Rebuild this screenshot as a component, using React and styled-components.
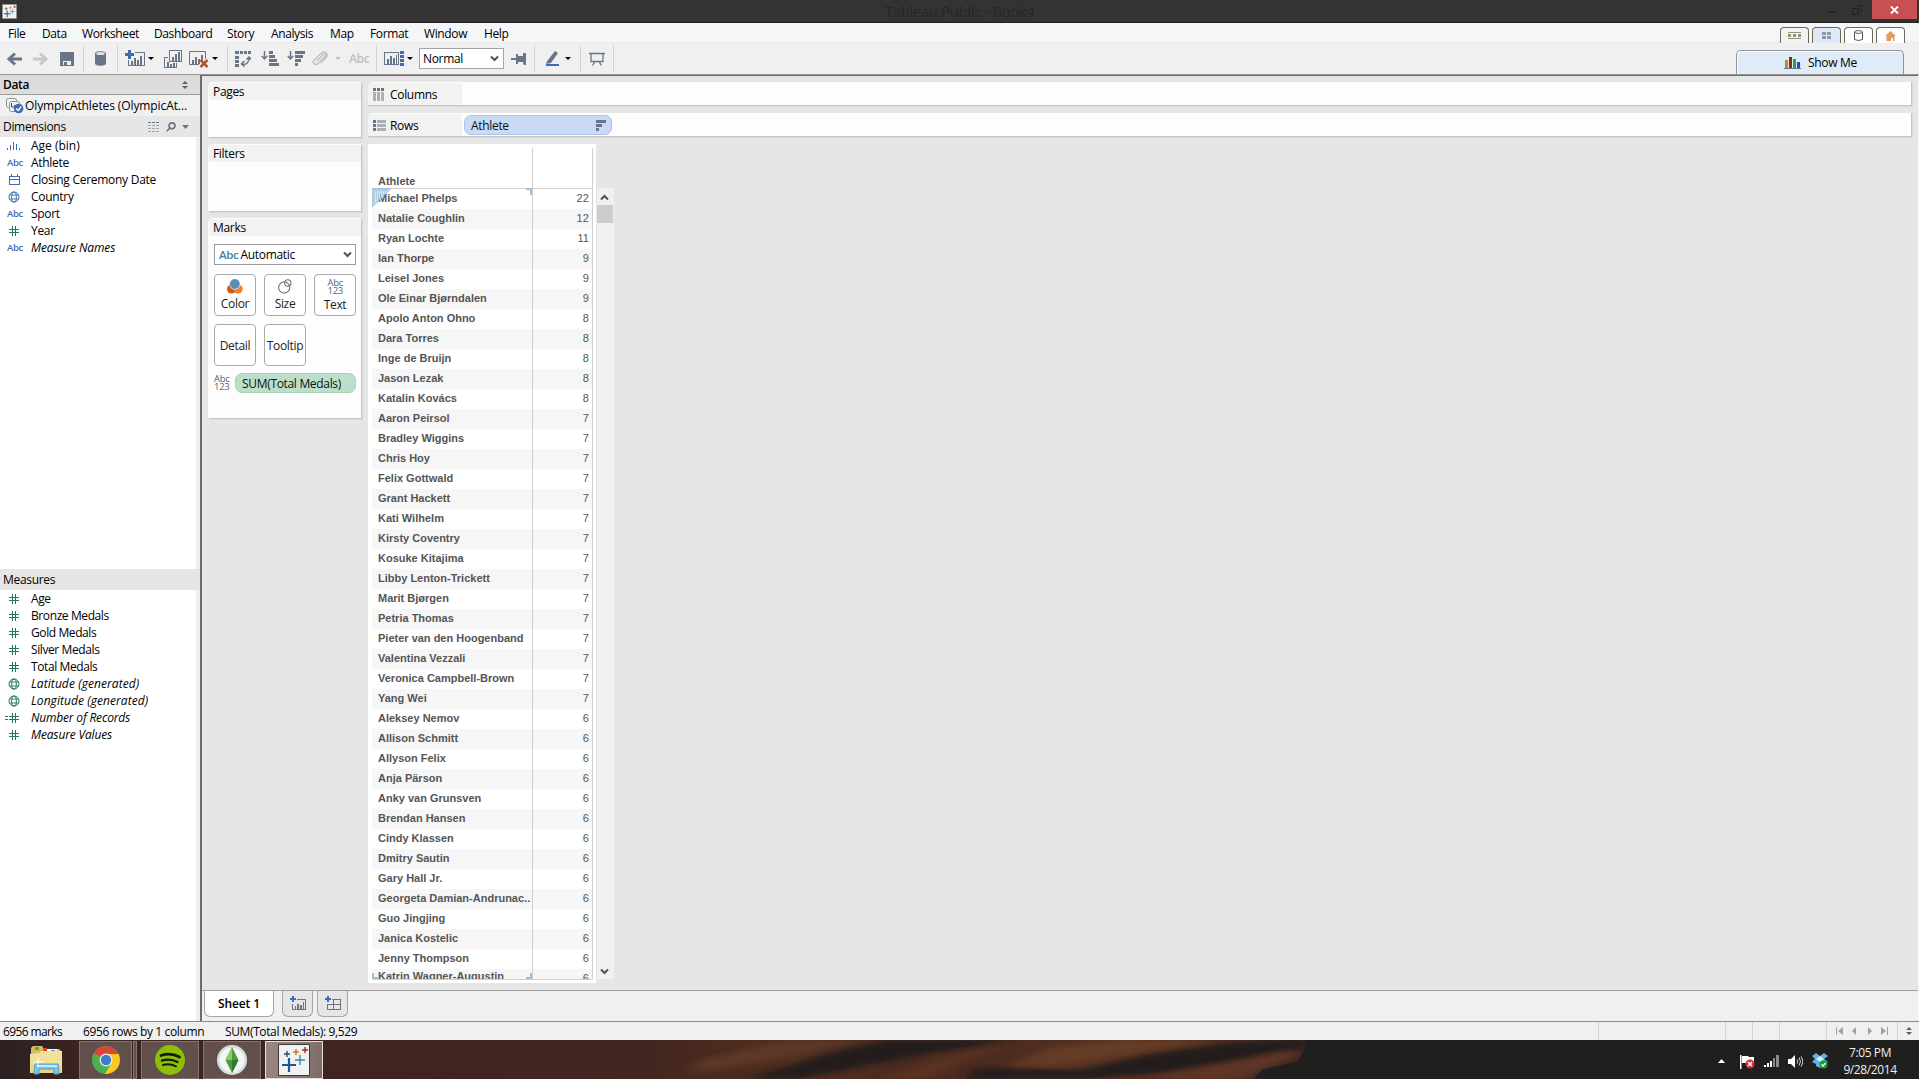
import React from 'react';
import styled, { createGlobalStyle } from 'styled-components';

const Global = createGlobalStyle`
  * { box-sizing: border-box; }
  body { margin: 0; overflow: hidden; background: #f0f0f0; }
  svg { display: block; flex: none; }
`;

const INK = '#687589';
const BLUE = '#3f6db5';
const GREEN = '#1f7a5a';

const Window = styled.div`
  width: 1919px;
  height: 1079px;
  display: flex;
  flex-direction: column;
  background: #f0f0f0;
  font-family: 'Open Sans', 'Noto Sans', sans-serif;
  font-size: 12px;
  letter-spacing: -0.32px;
  color: #000;
  white-space: nowrap;
`;

/* ---------- title bar ---------- */
const TitleBar = styled.header`
  height: 23px;
  background: #333;
  border-bottom: 1px solid #222;
  display: flex;
  align-items: flex-start;
`;
const AppBadge = styled.div`
  margin: 4px 0 0 2px;
  width: 16px;
  height: 15px;
`;
const TitleText = styled.div`
  flex: 1;
  margin-left: 867px;
  color: #262626;
  font-size: 14.6px;
  line-height: 23px;
  letter-spacing: -0.2px;
`;
const WinButtons = styled.div`
  display: flex;
  width: 98px;
  padding-left: 1px;
`;
const WinButton = styled.div`
  width: ${(p) => p.$w}px;
  height: 19px;
  display: flex;
  align-items: center;
  justify-content: center;
  background: ${(p) => p.$bg || 'transparent'};
`;

/* ---------- menu bar ---------- */
const MenuBar = styled.nav`
  height: 20px;
  background: #f5f6f8;
  display: flex;
  border-bottom: 1px solid #ececee;
  padding-left: 8px;
`;
const MenuItem = styled.span`
  width: ${(p) => p.$w}px;
  line-height: 21px;
  letter-spacing: -0.38px;
`;
const ViewTabs = styled.div`
  margin-left: auto;
  display: flex;
  gap: 3px;
  padding: 4px 14px 0 0;
`;
const ViewTab = styled.div`
  width: 29px;
  height: 16px;
  border: 1px solid #6c6a5c;
  border-bottom: 0;
  border-radius: 4px 4px 0 0;
  background: ${(p) => p.$bg};
  display: flex;
  align-items: center;
  justify-content: center;
`;

/* ---------- toolbar ---------- */
const Toolbar = styled.div`
  height: 32px;
  display: flex;
  align-items: center;
  border-bottom: 1px solid #979797;
`;
const Tool = styled.div`
  margin-left: ${(p) => p.$ml}px;
`;
const Sep = styled.div`
  margin-left: ${(p) => p.$ml}px;
  width: 1px;
  height: 27px;
  background: #d2d2d2;
`;
const Caret = styled.div`
  margin-left: ${(p) => p.$ml}px;
  border: 3px solid transparent;
  border-top-color: ${(p) => p.$c || '#000'};
  border-bottom: 0;
  width: 6px;
`;
const AbcTool = styled.div`
  margin-left: 8px;
  width: 20px;
  color: #bdbdbd;
  font-size: 12px;
  font-weight: 600;
`;
const FitSelect = styled.div`
  margin-left: 6px;
  width: 85px;
  height: 21px;
  border: 1px solid #a3a3a8;
  background: #fff;
  display: flex;
  align-items: center;
  justify-content: space-between;
  padding: 0 4px 1px 3px;
`;
const ShowMe = styled.div`
  align-self: flex-end;
  margin: 0 15px 0 auto;
  width: 168px;
  height: 24px;
  border: 1px solid #8f9296;
  border-bottom: 0;
  border-radius: 5px 5px 0 0;
  background: #dfebf6;
  box-shadow: inset 1px 1px 0 #fff;
  display: flex;
  align-items: center;
  padding-left: 47px;
  gap: 7px;
`;

/* ---------- body ---------- */
const Body = styled.div`
  height: 946px;
  display: flex;
`;
const DataPane = styled.aside`
  width: 200px;
  display: flex;
  flex-direction: column;
`;
const PaneTitle = styled.div`
  height: 20px;
  background: #dcdcdc;
  border-bottom: 1px solid #9c9c9c;
  display: flex;
  align-items: center;
  justify-content: space-between;
  padding: 0 12px 0 3px;
  font-weight: 600;
`;
const Source = styled.div`
  height: 21px;
  display: flex;
  align-items: center;
  gap: 1px;
  padding-left: 6px;
  background: #f0f0f0;
  letter-spacing: -0.1px;
`;
const SectionHead = styled.div`
  height: 21px;
  background: #e6e6e6;
  display: flex;
  align-items: center;
  padding: 0 11px 0 3px;
`;
const HeadIcons = styled.div`
  margin-left: auto;
  display: flex;
  align-items: center;
  gap: 6px;
`;
const FieldList = styled.div`
  height: ${(p) => p.$h}px;
  width: 196px;
  background: #fff;
`;
const Field = styled.div`
  height: 17px;
  line-height: 16px;
  display: grid;
  grid-template-columns: 31px 1fr;
  align-items: center;
  font-style: ${(p) => (p.$italic ? 'italic' : 'normal')};
  letter-spacing: ${(p) => p.$ls ?? -0.3}px;
`;
const FieldIcon = styled.div`
  padding-left: ${(p) => p.$pl || 7}px;
  color: #3f6db5;
  font-size: 9.5px;
  font-style: normal;
  font-weight: 600;
  letter-spacing: -0.3px;
`;

const Main = styled.main`
  flex: 1;
  display: flex;
  flex-direction: column;
  border-left: 2px solid #6d6a6a;
  border-right: 1px solid #f8f8f8;
`;
const Workspace = styled.section`
  height: 915px;
  background: #e6e6e6;
  border-top: 1px solid #6d6a6a;
  padding: 6px 6px 0 6px;
  display: flex;
  gap: 6px;
`;
const CardColumn = styled.div`
  display: flex;
  flex-direction: column;
  gap: 6px;
  width: 154px;
`;
const Card = styled.section`
  height: ${(p) => p.$h}px;
  background: #fdfdfd;
  border: 1px solid #fdfdfd;
  border-right-color: #c6c6c6;
  border-bottom-color: #c6c6c6;
  border-radius: 5px 1px 0 0;
  box-shadow: 1px 1px 0 #dadada;
  overflow: hidden;
`;
const CardHead = styled.div`
  height: 17px;
  padding-left: 4px;
  line-height: 17px;
  background: #f2f2f1;
`;
const MarkBody = styled.div`
  padding: 8px 5px 0 5px;
`;
const MarkSelect = styled.div`
  height: 21px;
  border: 1px solid #9d9da2;
  background: #fff;
  display: flex;
  align-items: center;
  gap: 2px;
  padding: 0 3px 1px 4px;
  svg { margin-left: auto; }
`;
const AbcBlue = styled.span`
  color: #4a7fa3;
  font-size: 11.5px;
  font-weight: 600;
`;
const MarkGrid = styled.div`
  display: grid;
  grid-template-columns: repeat(3, 42px);
  grid-auto-rows: 42px;
  gap: 8px;
  margin-top: 9px;
`;
const MarkButton = styled.div`
  border: 1px solid #a9a9a9;
  border-radius: 4px;
  background: #fff;
  color: #222;
  display: flex;
  flex-direction: column;
  align-items: center;
  justify-content: center;
  line-height: 15px;
  gap: 2px;
`;
const Abc123 = styled.div`
  width: 15px;
  color: #56647a;
  font-size: 9.5px;
  font-weight: 500;
  line-height: 8px;
  letter-spacing: -0.3px;
  text-align: center;
  white-space: pre-line;
`;
const PillRow = styled.div`
  display: flex;
  align-items: center;
  gap: 6px;
  margin-top: 7px;
`;
const Pill = styled.div`
  width: ${(p) => p.$w}px;
  height: 20px;
  border-radius: 7px;
  border: 1px solid ${(p) => p.$line};
  background: ${(p) => p.$bg};
  display: flex;
  align-items: center;
  justify-content: space-between;
  padding: 0 5px 0 6px;
  color: #111;
`;

const Canvas = styled.div`
  flex: 1;
  display: flex;
  flex-direction: column;
  gap: 7px;
`;
const Shelf = styled.div`
  height: 24px;
  background: #fdfdfd;
  border-right: 1px solid #c6c6c6;
  border-bottom: 1px solid #c6c6c6;
  border-radius: 5px 0 0 0;
  box-shadow: 1px 1px 0 #dadada;
  padding-top: 1px;
  display: flex;
  align-items: center;
`;
const ShelfName = styled.div`
  width: 94px;
  height: 22px;
  margin-right: 2px;
  padding: 1px 0 0 5px;
  border-radius: 4px 0 0 0;
  background: #f2f2f1;
  display: flex;
  align-items: center;
  gap: ${(p) => p.$gap}px;
`;
const VizRow = styled.div`
  display: flex;
  gap: 1px;
  height: 839px;
`;
const Viz = styled.div`
  width: 228px;
  background: #fff;
  padding: 4px 3px 4px 4px;
`;
const Table = styled.div`
  height: 832px;
  border-right: 1px solid #d0d0d0;
  border-bottom: 1px solid #d0d0d0;
  position: relative;
  font-family: 'Liberation Sans', Arial, sans-serif;
  font-size: 11px;
  letter-spacing: 0;
  color: #555;
  overflow: hidden;
`;
const TableHead = styled.div`
  height: 41px;
  border-bottom: 1px solid #d0d0d0;
  padding: 26px 0 0 6px;
  font-weight: 700;
  line-height: 14px;
`;
const Row = styled.div`
  height: 20px;
  line-height: 19px;
  display: grid;
  grid-template-columns: 160px 1fr;
  background: ${(p) => (p.$alt ? '#f6f6f6' : '#fff')};
`;
const Name = styled.div`
  font-weight: 700;
  padding-left: 6px;
  line-height: ${(p) => (p.$last ? 14 : 19)}px;
`;
const Value = styled.div`
  text-align: right;
  padding-right: 3px;
  letter-spacing: 0.1px;
  line-height: ${(p) => (p.$last ? 19 : 19)}px;
`;
const ColumnRule = styled.div`
  position: absolute;
  left: 160px;
  top: 0;
  bottom: 0;
  width: 1px;
  background: #d0d0d0;
`;
const Overlay = styled.div`
  position: absolute;
  left: ${(p) => p.$x}px;
  top: ${(p) => p.$y}px;
`;
const Scrollbar = styled.div`
  margin-top: 44px;
  width: 17px;
  height: 791px;
  background: #f0f0f0;
  display: flex;
  flex-direction: column;
  align-items: flex-start;
`;
const ScrollArrow = styled.div`
  height: 17px;
  display: flex;
  align-items: center;
  padding: 1px 0 0 3px;
  margin-top: ${(p) => (p.$end ? 'auto' : 0)};
`;
const Thumb = styled.div`
  width: 16px;
  height: 18px;
  background: #cdcdcd;
`;

const SheetTabs = styled.div`
  height: 30px;
  border-top: 1px solid #9f9f9f;
  display: flex;
  padding-left: 2px;
`;
const SheetTab = styled.div`
  width: ${(p) => p.$w}px;
  height: 26px;
  margin-right: ${(p) => p.$mr || 0}px;
  border: 1px solid #a6a6a6;
  border-top: 0;
  border-radius: 0 0 6px 6px;
  background: ${(p) => (p.$on ? '#fff' : '#e6e6e6')};
  font-weight: 600;
  letter-spacing: -0.1px;
  display: flex;
  align-items: center;
  justify-content: center;
`;

const Status = styled.footer`
  height: 19px;
  border-top: 1px solid #8c8c8c;
  display: flex;
  align-items: center;
  padding-left: 3px;
`;
const StatusText = styled.span`
  width: ${(p) => p.$w}px;
  padding-top: 1px;
  letter-spacing: ${(p) => p.$ls || -0.38}px;
`;
const StatusCells = styled.div`
  margin-left: auto;
  display: flex;
  height: 18px;
`;
const StatusCell = styled.div`
  width: ${(p) => p.$w}px;
  border-left: 1px solid #d3d3d3;
  display: flex;
  align-items: center;
  justify-content: space-evenly;
`;

/* ---------- taskbar ---------- */
const Taskbar = styled.div`
  height: 39px;
  position: relative;
  z-index: 0;
  display: flex;
  align-items: stretch;
  color: #eee;
`;
const Wallpaper = styled.div`
  position: absolute;
  inset: 0;
  z-index: -1;
  overflow: hidden;
  background: linear-gradient(90deg, #2c2021 0, #3b2422 80px, #40241f 400px, #42251f 640px, #50301f 790px, #4b2b20 900px, #4b2c20 1000px, #573220 1130px, #4d2d21 1230px, #3a241f 1290px);
`;
const TaskButton = styled.div`
  width: ${(p) => p.$w}px;
  margin: 1px ${(p) => p.$mr || 0}px 0 0;
  padding-left: ${(p) => (p.$plain ? 15 : 0)}px;
  border: ${(p) => (p.$plain ? '0' : `1px solid ${p.$on ? '#e8dfdc' : '#86736f'}`)};
  background: ${(p) => (p.$plain ? 'none' : p.$on ? 'linear-gradient(100deg,#9a8882,#806c66)' : '#62504c')};
  display: flex;
  align-items: center;
  justify-content: center;
`;
const Tray = styled.div`
  margin-left: auto;
  width: 201px;
  padding-top: 3px;
  display: flex;
  align-items: center;
  gap: 9px;
`;
const TrayArrow = styled.div`
  margin-right: 6px;
`;
const Clock = styled.div`
  width: 60px;
  margin-left: 3px;
  text-align: center;
  line-height: 17px;
  letter-spacing: -0.4px;
`;

/* ---------- icons ---------- */
const Svg = ({ w, h, children, fill = 'none', stroke = 'none', sw = 1, crisp }) => (
  <svg width={w} height={h} viewBox={`0 0 ${w} ${h}`} fill={fill} stroke={stroke} strokeWidth={sw}
    shapeRendering={crisp ? 'crispEdges' : 'auto'}>{children}</svg>
);
const Streaks = () => (
  <Svg w={1919} h={39}>
    <defs>
      <filter id="soft" x="-5%" y="-50%" width="110%" height="200%"><feGaussianBlur stdDeviation="7 2.5" /></filter>
    </defs>
    <g filter="url(#soft)">
      <path fill="#5d3826" d="M700 20L790 0h70L760 22 690 34z" />
      <path fill="#231d1b" d="M745 39L800 22 850 8 890 0h125L930 13 860 27 800 39z" />
      <path fill="#5c3223" d="M880 39L950 16 1010 4 960 22 930 39z" />
      <path fill="#693d27" opacity=".8" d="M1010 26L1050 8 1120 0h90L1130 14 1060 26z" />
      <path fill="#211d1b" d="M965 39L975 28 1080 30 1150 14 1230 3 1312 0 1300 8 1240 20 1160 33 1090 39z" />
      <path fill="#5e3426" d="M1150 39L1230 22 1290 10 1300 16 1255 32 1240 39z" />
    </g>
    <path fill="#1f1f1e" d="M1308 0L1303 12 1297 22 1263 29 1254 39H1919V0z" />
  </Svg>
);
const Arrow = ({ flip, c }) => (
  <Svg w={15} h={14} stroke={c} sw={3}>
    <path d={flip ? 'M0 7H12M7 1.5l6 5.5-6 5.5' : 'M15 7H3M8 1.5L2 7l6 5.5'} />
  </Svg>
);
const Save = () => (
  <Svg w={14} h={14} crisp><path fill={INK} d="M0 0h14v14H0z" /><path fill="#eee" d="M3 9h8v4H3z" /><path fill={INK} d="M4 10h3v3H4z" /></Svg>
);
const Cylinder = () => (
  <Svg w={11} h={15}><path fill={INK} d="M0 2.5C0-.5 11-.5 11 2.5v10c0 3-11 3-11 0z" /><ellipse cx="5.5" cy="2.6" rx="4.3" ry="1.5" fill="#dfe2e6" /></Svg>
);
const Plus = ({ x = 0, y = 0 }) => <path fill={BLUE} stroke="none" d={`M${x + 3} ${y}h3v3h3v3h-3v3h-3v-3h-3v-3h3z`} />;
const NewSheet = () => (
  <Svg w={20} h={17} crisp><path stroke={INK} d="M10 2.500h9.500v13h-16V10" /><path fill={INK} d="M6 11h2v4H6zM9 8h2v7H9zM12 10h2v5h-2zM15 6h2v9h-2z" /><Plus /></Svg>
);
const DupSheet = () => (
  <Svg w={18} h={18} crisp><path stroke={INK} d="M5.500.500h12v11h-12zM4 7.500H.500v10h12V13" /><path fill={INK} d="M8 7h2v4H8zM11 4h2v7h-2zM14 2h2v9h-2zM3 12h2v5H3zM6 14h2v3H6zM9 13h2v4H9z" /></Svg>
);
const ClearSheet = () => (
  <Svg w={19} h={18}><path stroke={INK} d="M10 14.500H.500v-13h16V9" /><path fill={INK} d="M3 10h2v4H3zM6 7h2v7H6zM9 9h2v5H9zM12 5h2v5h-2z" /><path stroke="#b9502f" strokeWidth="2.600" d="M11.500 10l7 7M18.500 10l-7 7" /></Svg>
);
const Swap = () => (
  <Svg w={16} h={16}><path fill={INK} d="M0 0h4v3H0zM5 0h3v3H5zM9 0h3v3H9zM13 0h3v3h-3zM0 5h4v3H0zM0 9h4v3H0zM0 13h4v3H0z" /><path stroke={INK} strokeWidth="1.500" d="M7 13c4 1.500 7-1.500 7-6M9.500 10l-3 3 3 2.500M11.500 8.500l2.500-2.500 2 2.500" /></Svg>
);
const SortTool = ({ desc }) => (
  <Svg w={18} h={15}><path fill={INK} d={desc ? 'M8 0h10v3H8zM8 4h8v3H8zM8 8h6v3H8zM8 12h3v3H8z' : 'M8 0h4v3H8zM8 4h6v3H8zM8 8h8v3H8zM8 12h10v3H8z'} /><path stroke={INK} strokeWidth="1.500" d="M3.500 0v7M.8 5l2.700 3 2.700-3" /></Svg>
);
const Clip = () => (
  <Svg w={16} h={15} stroke="#bfbfbf" sw={1.3}><path d="M5 10l6-6.500c2-1.500 3.500.3 2.300 1.800L6 12.500c-3 2.500-6-.6-4-3L9 2.300C12-.8 17 2.500 14.500 6L9 12" /></Svg>
);
const ShowCards = () => (
  <Svg w={20} h={15} crisp><path stroke={INK} d="M.5 1.500h14v12H.500z" /><path fill={INK} d="M3 8h2v5H3zM6 5h2v8H6zM9 7h2v6H9zM12 4h1v9h-1z" /><path fill={BLUE} d="M16 0h4v3h-4zM16 4h4v3h-4zM16 8h4v3h-4zM16 12h4v3h-4z" /></Svg>
);
const Pin = () => (
  <Svg w={15} h={12} fill={INK}><path d="M0 5h6v2H0zM5 1h2v10H5zM7 3h5v6H7zM12 0h3v12h-2l-1-2z" /></Svg>
);
const Pen = () => (
  <Svg w={15} h={15}><path fill={INK} d="M11 0l3 2-7 10-4 1-1-1 2-3z" /><path fill={BLUE} d="M2 13h13v2H2z" /></Svg>
);
const Present = () => (
  <Svg w={16} h={14} stroke={INK}><path d="M0 1.500h16M2 1.500v8h12v-8M6 9.500L3.500 13.500M10 9.500l2.500 4" strokeWidth="1.300" /></Svg>
);
const Chevron = ({ up }) => (
  <Svg w={9} h={7} stroke="#505050" sw={2}><path d={up ? 'M1 5.500l3.500-3.500L8 5.500' : 'M1 1.500L4.500 5 8 1.500'} /></Svg>
);
const UpDown = () => <Svg w={6} h={8} fill="#556075"><path d="M3 0l3 3H0zM3 8l3-3H0z" /></Svg>;
const Crosses = ({ s }) => (
  <svg width={s} height={s} viewBox="0 0 32 32">
    <path fill="#eff1f3" stroke="#3b3b3b" d="M.5.5h31v31H.5z" />
    <path stroke="#1b5a8c" strokeWidth="2.200" d="M11 14v14M4 21h14" />
    <path stroke="#3f87a8" strokeWidth="1.400" d="M22 11v10M17 16h10" />
    <path stroke="#3a4577" strokeWidth="1.400" d="M9 7v6M6 10h6" />
    <path stroke="#c77c20" strokeWidth="1.400" d="M18 5v6M15 8h6" />
    <path stroke="#a1292e" strokeWidth="1.400" d="M27 3v6M24 6h6" />
  </svg>
);
const Hash = ({ eq }) => (
  <Svg w={eq ? 14 : 10} h={10} stroke={GREEN} crisp>
    <path d={eq ? 'M7.500 0v10M10.500 0v10M4 3.500h10M4 6.500h10M0 3.500h3M0 6.500h3' : 'M3.500 0v10M6.500 0v10M0 3.500h10M0 6.500h10'} />
  </Svg>
);
const Globe = ({ c = BLUE }) => (
  <Svg w={12} h={12} stroke={c}><circle cx="6" cy="6" r="5" /><ellipse cx="6" cy="6" rx="2.300" ry="5" /><path d="M1.500 4h9M1.500 8h9" strokeWidth=".9" /></Svg>
);
const Bin = () => (
  <Svg w={14} h={9} crisp fill={BLUE}><path d="M0 7h1v2H0zM3 4h1v5H3zM6 1h1v8H6zM9 3h1v6H9zM12 7h1v2h-1z" /></Svg>
);
const Calendar = () => (
  <Svg w={11} h={11} stroke={BLUE} crisp><path d="M.5 2.500h10v8H.500zM.5 5.500h10M2.500 0v2M8.500 0v2" /></Svg>
);
const SourceIcon = () => (
  <Svg w={18} h={16}><rect x=".5" y=".5" width="10" height="9" rx="2" fill="#f5f5f5" stroke="#8a8f98" /><rect x="3.500" y="3.500" width="10" height="10" rx="2" fill="#f5f5f5" stroke="#8a8f98" /><path stroke="#444" d="M5.500 5v4h4M8 7l2 2-2 2" /><circle cx="12.600" cy="10.500" r="4.800" fill={BLUE} /><path stroke="#fff" strokeWidth="1.400" d="M10.200 10.500l2 2 3-4" /></Svg>
);
const ListIcon = () => (
  <Svg w={12} h={10} crisp>{[0, 3, 6, 9].map((y) => <path key={y} stroke={y ? '#a2a6ac' : INK} strokeDasharray="3 1" d={`M0 ${y + 0.5}h12`} />)}</Svg>
);
const Search = () => <Svg w={10} h={10} stroke={INK} sw={1.7}><circle cx="6" cy="3.800" r="3" /><path d="M4 6L.8 9.200" /></Svg>;
const Triangle = ({ c = INK }) => <Svg w={7} h={4} fill={c}><path d="M0 0h7L3.500 4z" /></Svg>;
const ColIcon = () => (
  <Svg w={12} h={13} crisp>{[0, 4, 8].map((x) => <g key={x}><path fill={INK} d={`M${x} 0h3v3h-3z`} /><path fill="#abb1ba" d={`M${x} 4h3v9h-3z`} /></g>)}</Svg>
);
const RowIcon = () => (
  <Svg w={13} h={11} crisp>{[0, 4, 8].map((y) => <g key={y}><path fill={INK} d={`M0 ${y}h3v3H0z`} /><path fill="#abb1ba" d={`M4 ${y}h9v3H4z`} /></g>)}</Svg>
);
const SortGlyph = () => <Svg w={10} h={11} fill={INK} crisp><path d="M0 0h10v3H0zM0 4h6v3H0zM0 8h3v3H0z" /></Svg>;
const ColorIcon = () => (
  <Svg w={16} h={15}><circle cx="4.500" cy="10" r="4.500" fill="#d35b0c" /><circle cx="11.200" cy="10" r="4.500" fill="#f58025" /><circle cx="7.800" cy="5" r="5.300" fill="#5a8db3" stroke="#fff" strokeWidth=".7" /></Svg>
);
const SizeIcon = () => (
  <Svg w={14} h={15} stroke={INK} sw={1.1}><circle cx="6.200" cy="8.500" r="5.600" /><circle cx="9.800" cy="4" r="3.200" /></Svg>
);
const AddSheet = ({ grid }) => (
  <Svg w={16} h={15} crisp><path stroke={INK} strokeWidth="1" d={grid ? 'M7 3.500h8v10H2.500V8M8.500 4v10M3 8.500h12.500M15.500 3v11' : 'M7 3.500h8.500v10h-13V8'} />{!grid && <path fill={INK} d="M5 10h1v4H5zM7 8h2v6H7zM10 9h2v5h-2zM13 6h1v8h-1z" />}<path fill={BLUE} d="M2 0h2v2h2v2H4v2H2V4H0V2h2z" /></Svg>
);
const Nav = ({ d }) => <Svg w={8} h={8} fill="#a0a0a0"><path d={d} /></Svg>;

const Explorer = () => (
  <Svg w={34} h={30}>
    <path fill="#d9bc62" d="M2 3l2-2h9l2 3h15l2 2v20H2z" /><path fill="#4fae46" d="M6 2h4v3H6z" /><path fill="#cf4b2a" d="M14 3h4v3h-4z" /><path fill="#fff" d="M18 4h10v4H18z" /><path fill="#3c8fd3" d="M22 5h4v3h-4z" />
    <path fill="#f2e19b" d="M1 9l9-1 2-2h21v22H1z" /><path fill="#ead27e" d="M2 20h30v8H2z" />
    <path fill="#7fc4e6" stroke="#4b9fce" d="M6 19h23l1 10h-5v-5H10v5H5z" /><path fill="#c7e9f8" d="M8 20h20v2H8z" /><path stroke="#fff" d="M9 13v9M5 17h9" />
  </Svg>
);
const Chrome = () => (
  <Svg w={30} h={30}>
    <circle cx="15" cy="15" r="14" fill="#4caf50" />
    <path fill="#dd4436" d="M15 15L2.900 8A14 14 0 0 1 27.500 9H15z" />
    <path fill="#fbc91f" d="M15 9h12.500A14 14 0 0 1 14 29l6-10z" />
    <circle cx="15" cy="15" r="6.500" fill="#eee" /><circle cx="15" cy="15" r="5.200" fill="#3c7fc8" />
  </Svg>
);
const Spotify = () => (
  <Svg w={30} h={30}><circle cx="15" cy="15" r="15" fill="#8fbf05" /><g stroke="#16190c" strokeLinecap="round"><path strokeWidth="2.800" d="M6 10.500c6-2 13-1.500 18.500 1.500" /><path strokeWidth="2.300" d="M7 15.500c5-1.500 11-1 15.500 1.500" /><path strokeWidth="2" d="M8 20c4-1.200 9-.8 13 1.300" /></g></Svg>
);
const Sims = () => (
  <Svg w={30} h={30}><circle cx="15" cy="15" r="15" fill="#d9dddd" /><circle cx="15" cy="15" r="12.500" fill="#f4f5f5" /><path fill="#4c9b3e" d="M15 2l6.500 13L15 28 8.500 15z" /><path fill="#8cc96c" d="M15 2v13H8.500z" /><path fill="#2e7a30" d="M15 15v13l6.500-13z" /></Svg>
);
const Flag = () => (
  <Svg w={15} h={15}><path fill="#fff" d="M0 1h1.500v14H0zM2 2h6l1 1h5v6H2z" /><circle cx="10" cy="10" r="4.500" fill="#d12f2f" /><path stroke="#fff" strokeWidth="1.500" d="M8 8l4 4M12 8l-4 4" /></Svg>
);
const Signal = () => (
  <Svg w={15} h={12} crisp><path fill="#fff" d="M0 10h2v2H0zM3 8h2v4H3zM6 6h2v6H6z" /><path fill="#8a8a8a" d="M9 3h2v9H9zM12 0h3v12h-3z" /></Svg>
);
const Speaker = () => (
  <Svg w={15} h={13}><path fill="#fff" d="M0 4h3l4-4v13l-4-4H0z" /><path stroke="#ddd" d="M9 4.500q1.500 2 0 4M11 2.500q3 4 0 8M13 1.500q3.500 5 0 10" /></Svg>
);
const Dropbox = () => (
  <Svg w={16} h={16}><path fill="#5db2ee" d="M4 0l4 3 4-3 4 3-4 3 4 3-4 2v2l-4 2-4-2v-2L0 9l3-3-3-3z" /><path fill="#d9effc" d="M8 3l4 3-4 3-4-3z" /><circle cx="11.500" cy="11.500" r="4" fill="#1c9b35" /><path stroke="#fff" strokeWidth="1.200" d="M9.500 11.500l1.500 1.500 2.500-3" /></Svg>
);

/* ---------- data ---------- */
const MENU = [['File', 34], ['Data', 40], ['Worksheet', 72], ['Dashboard', 73], ['Story', 44], ['Analysis', 59], ['Map', 40], ['Format', 54], ['Window', 60], ['Help', 40]];
const ATHLETES = [
  ['Michael Phelps', 22], ['Natalie Coughlin', 12], ['Ryan Lochte', 11],
  ...['Ian Thorpe', 'Leisel Jones', 'Ole Einar Bjørndalen'].map((n) => [n, 9]),
  ...['Apolo Anton Ohno', 'Dara Torres', 'Inge de Bruijn', 'Jason Lezak', 'Katalin Kovács'].map((n) => [n, 8]),
  ...['Aaron Peirsol', 'Bradley Wiggins', 'Chris Hoy', 'Felix Gottwald', 'Grant Hackett', 'Kati Wilhelm', 'Kirsty Coventry', 'Kosuke Kitajima', 'Libby Lenton-Trickett', 'Marit Bjørgen', 'Petria Thomas', 'Pieter van den Hoogenband', 'Valentina Vezzali', 'Veronica Campbell-Brown', 'Yang Wei'].map((n) => [n, 7]),
  ...['Aleksey Nemov', 'Allison Schmitt', 'Allyson Felix', 'Anja Pärson', 'Anky van Grunsven', 'Brendan Hansen', 'Cindy Klassen', 'Dmitry Sautin', 'Gary Hall Jr.', 'Georgeta Damian-Andrunac..', 'Guo Jingjing', 'Janica Kostelic', 'Jenny Thompson', 'Katrin Wagner-Augustin'].map((n) => [n, 6]),
];
const DIMENSIONS = [
  [<Bin />, 'Age (bin)', 7, false, 0], ['Abc', 'Athlete'], [<Calendar />, 'Closing Ceremony Date', 9, false, -0.27], [<Globe />, 'Country', 8],
  ['Abc', 'Sport'], [<Hash />, 'Year', 9], ['Abc', 'Measure Names', 7, true, -0.1],
];
const MEASURES = [
  ...['Age', 'Bronze Medals', 'Gold Medals', 'Silver Medals', 'Total Medals'].map((n) => [<Hash />, n, 9, false, -0.4]),
  [<Globe c={GREEN} />, 'Latitude (generated)', 8, true, 0.08], [<Globe c={GREEN} />, 'Longitude (generated)', 8, true, 0.06],
  [<Hash eq />, 'Number of Records', 5, true, -0.18], [<Hash />, 'Measure Values', 9, true, -0.15],
];
const Fields = ({ items, h }) => (
  <FieldList $h={h}>
    {items.map(([icon, name, pl, italic, ls]) => (
      <Field key={name} $italic={italic} $ls={ls}><FieldIcon $pl={pl}>{icon}</FieldIcon>{name}</Field>
    ))}
  </FieldList>
);

export default function App() {
  return (
    <Window>
      <Global />
      <TitleBar>
        <AppBadge><Crosses s={15} /></AppBadge>
        <TitleText>Tableau Public - Book4</TitleText>
        <WinButtons>
          <WinButton $w={20}><Svg w={8} h={6} fill="#222"><path d="M0 4h8v2H0z" /></Svg></WinButton>
          <WinButton $w={30}><Svg w={10} h={10} stroke="#222"><path d="M.5 3.500h6v6h-6zM3 .500h6.500v6" strokeWidth="1.200" /></Svg></WinButton>
          <WinButton $w={45} $bg="#c75050"><Svg w={9} h={8} stroke="#fff" sw={1.8}><path d="M1 .5l7 7M8 .5l-7 7" /></Svg></WinButton>
        </WinButtons>
      </TitleBar>
      <MenuBar>
        {MENU.map(([m, w]) => <MenuItem key={m} $w={w}>{m}</MenuItem>)}
        <ViewTabs>
          <ViewTab $bg="#f2f2f0"><Svg w={13} h={7} crisp fill="#95927b"><path d="M0 0h13v1H0zM0 2h3v3H0zM5 2h3v3H5zM10 2h3v3h-3zM0 6h13v1H0z" /></Svg></ViewTab>
          <ViewTab $bg="#e1e8f5"><Svg w={9} h={7} crisp fill="#8d98a8"><path d="M0 0h4v3H0zM5 0h4v3H5zM0 4h4v3H0zM5 4h4v3H5z" /></Svg></ViewTab>
          <ViewTab $bg="#fff"><Svg w={9} h={11} stroke="#555"><path d="M.5 2v7.500q4 2 8 0V2" /><ellipse cx="4.500" cy="2" rx="4" ry="1.400" /></Svg></ViewTab>
          <ViewTab $bg="#fff"><Svg w={11} h={10} fill="#e79b55"><path d="M5.500 0L11 5H9.500v5H8V7H6v3H1.500V5H0z" /></Svg></ViewTab>
        </ViewTabs>
      </MenuBar>
      <Toolbar>
        <Tool $ml={7}><Arrow c={INK} /></Tool>
        <Tool $ml={11}><Arrow flip c="#c8c8c8" /></Tool>
        <Tool $ml={12}><Save /></Tool>
        <Sep $ml={9} />
        <Tool $ml={11}><Cylinder /></Tool>
        <Sep $ml={11} />
        <Tool $ml={7}><NewSheet /></Tool>
        <Caret $ml={3} />
        <Tool $ml={10}><DupSheet /></Tool>
        <Tool $ml={7}><ClearSheet /></Tool>
        <Caret $ml={4} />
        <Sep $ml={9} />
        <Tool $ml={7}><Swap /></Tool>
        <Tool $ml={10}><SortTool /></Tool>
        <Tool $ml={8}><SortTool desc /></Tool>
        <Tool $ml={7}><Clip /></Tool>
        <Caret $ml={7} $c="#c0c0c0" />
        <AbcTool>Abc</AbcTool>
        <Sep $ml={7} />
        <Tool $ml={7}><ShowCards /></Tool>
        <Caret $ml={3} />
        <FitSelect>Normal<Chevron /></FitSelect>
        <Tool $ml={7}><Pin /></Tool>
        <Sep $ml={8} />
        <Tool $ml={9}><Pen /></Tool>
        <Caret $ml={6} />
        <Sep $ml={9} />
        <Tool $ml={8}><Present /></Tool>
        <Sep $ml={8} />
        <ShowMe>
          <Svg w={17} h={12} crisp><path fill="#b98e12" d="M1 3h3v8H1z" /><path fill="#8c2a10" d="M5 0h3v11H5z" /><path fill="#2aa82a" d="M9 2h3v9H9z" /><path fill="#2b3df2" d="M13 5h3v6h-3z" /><path fill="#707585" d="M0 11h17v1H0z" /></Svg>
          Show Me
        </ShowMe>
      </Toolbar>
      <Body>
        <DataPane>
          <PaneTitle>Data<UpDown /></PaneTitle>
          <Source><SourceIcon />OlympicAthletes (OlympicAt...</Source>
          <SectionHead>Dimensions<HeadIcons><ListIcon /><Search /><Triangle /></HeadIcons></SectionHead>
          <Fields items={DIMENSIONS} h={432} />
          <SectionHead>Measures</SectionHead>
          <Fields items={MEASURES} h={431} />
        </DataPane>
        <Main>
          <Workspace>
            <CardColumn>
              <Card $h={56}><CardHead>Pages</CardHead></Card>
              <Card $h={68}><CardHead>Filters</CardHead></Card>
              <Card $h={201}>
                <CardHead>Marks</CardHead>
                <MarkBody>
                  <MarkSelect><AbcBlue>Abc</AbcBlue>Automatic<Chevron /></MarkSelect>
                  <MarkGrid>
                    <MarkButton><ColorIcon />Color</MarkButton>
                    <MarkButton><SizeIcon />Size</MarkButton>
                    <MarkButton><Abc123>{'Abc\n123'}</Abc123>Text</MarkButton>
                    <MarkButton>Detail</MarkButton>
                    <MarkButton>Tooltip</MarkButton>
                  </MarkGrid>
                  <PillRow>
                    <Abc123>{'Abc\n123'}</Abc123>
                    <Pill $w={121} $bg="#bbdfc9" $line="#a9d2ba">SUM(Total Medals)</Pill>
                  </PillRow>
                </MarkBody>
              </Card>
            </CardColumn>
            <Canvas>
              <Shelf><ShelfName $gap={5}><ColIcon />Columns</ShelfName></Shelf>
              <Shelf>
                <ShelfName $gap={4}><RowIcon />Rows</ShelfName>
                <Pill $w={148} $bg="#c9daf5" $line="#abc4ec">Athlete<SortGlyph /></Pill>
              </Shelf>
              <VizRow>
                <Viz>
                  <Table>
                    <TableHead>Athlete</TableHead>
                    {ATHLETES.map(([name, n], i) => {
                      const last = i === ATHLETES.length - 1;
                      return <Row key={name} $alt={i % 2 === 1}><Name $last={last}>{name}</Name><Value $last={last}>{n}</Value></Row>;
                    })}
                    <ColumnRule />
                    <Overlay $x={0} $y={40}><Svg w={20} h={20}><path fill="#9dc0dc" opacity=".8" d="M0 0h20L0 20z" /><path stroke="#d5e6f1" d="M3.500 3v12M5.500 3v10M7.500 3v8M9.500 3v6M11.500 3v4M13.500 3v2" /></Svg></Overlay>
                    <Overlay $x={154} $y={40}><Svg w={6} h={7} fill="#9dc0dc"><path d="M0 0h6v7H4V2H0z" /></Svg></Overlay>
                    <Overlay $x={0} $y={825}><Svg w={6} h={6} fill="#9dc0dc"><path d="M0 0h2v4h4v2H0z" /></Svg></Overlay>
                    <Overlay $x={154} $y={825}><Svg w={6} h={6} fill="#9dc0dc"><path d="M4 0h2v6H0V4h4z" /></Svg></Overlay>
                  </Table>
                </Viz>
                <Scrollbar>
                  <ScrollArrow><Chevron up /></ScrollArrow>
                  <Thumb />
                  <ScrollArrow $end><Chevron /></ScrollArrow>
                </Scrollbar>
              </VizRow>
            </Canvas>
          </Workspace>
          <SheetTabs>
            <SheetTab $w={70} $on $mr={8}>Sheet 1</SheetTab>
            <SheetTab $w={31} $mr={4}><AddSheet /></SheetTab>
            <SheetTab $w={31}><AddSheet grid /></SheetTab>
          </SheetTabs>
        </Main>
      </Body>
      <Status>
        <StatusText $w={80} $ls={-0.62}>6956 marks</StatusText>
        <StatusText $w={142}>6956 rows by 1 column</StatusText>
        <StatusText>SUM(Total Medals): 9,529</StatusText>
        <StatusCells>
          <StatusCell $w={127} /><StatusCell $w={27} /><StatusCell $w={27} /><StatusCell $w={47} />
          <StatusCell $w={71}>
            <Nav d="M1 0h1v8H1zM8 0v8L3 4z" /><Nav d="M6 0v8L2 4z" /><Nav d="M2 0v8l4-4z" /><Nav d="M6 0h1v8H6zM0 0v8l5-4z" />
          </StatusCell>
          <StatusCell $w={22}><UpDown /></StatusCell>
        </StatusCells>
      </Status>
      <Taskbar>
        <Wallpaper><Streaks /></Wallpaper>
        <TaskButton $plain $w={76} $mr={3}><Explorer /></TaskButton>
        <TaskButton $w={53} $mr={1}><Chrome /></TaskButton>
        <TaskButton $w={4} $mr={4} />
        <TaskButton $w={58} $mr={4}><Spotify /></TaskButton>
        <TaskButton $w={58} $mr={4}><Sims /></TaskButton>
        <TaskButton $w={58} $on><Crosses s={32} /></TaskButton>
        <Tray>
          <TrayArrow><Svg w={7} h={4} fill="#fff"><path d="M0 4h7L3.500 0z" /></Svg></TrayArrow>
          <Flag /><Signal /><Speaker /><Dropbox />
          <Clock>7:05 PM<br />9/28/2014</Clock>
        </Tray>
      </Taskbar>
    </Window>
  );
}
